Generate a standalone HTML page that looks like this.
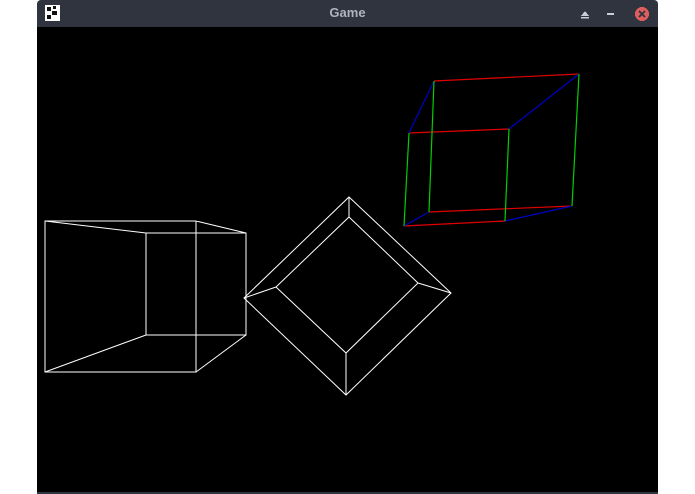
<!DOCTYPE html>
<html><head><style>
html,body{margin:0;padding:0;background:#fff;width:695px;height:494px;overflow:hidden}
.win{position:absolute;left:37px;top:0;width:621px;height:494px;background:#2f343f;border-radius:4px 4px 0 0}
.title{position:absolute;left:0;top:0;width:621px;height:27px;text-align:center;font:bold 13px "Liberation Sans",sans-serif;color:#aeb4bf;line-height:26px}
.canvas{position:absolute;left:0;top:27px;width:621px;height:465px;background:#000}
</style></head><body>
<div class="win">
<div class="title">Game</div>
<div class="canvas"></div>
</div>
<svg width="695" height="494" style="position:absolute;left:0;top:0" shape-rendering="crispEdges">
<!-- app icon -->
<rect x="45" y="5" width="15" height="16" fill="#fff"/>
<path d="M47 7h4v4h-4zM52 11h5v4h-5zM47 15h4v4h-4zM53 6h3v3h-3z" fill="#111"/>
<!-- buttons -->
<path d="M581 16l4-5 4 5z" fill="#c8ccd3"/><rect x="581" y="17" width="8" height="1.5" fill="#c8ccd3"/>
<rect x="607" y="13" width="7" height="2" fill="#c8ccd3"/>
<circle cx="642" cy="14" r="7" fill="#e05d5d"/>
<path d="M639 11l6 6M645 11l-6 6" stroke="#2f343f" stroke-width="1.8" shape-rendering="auto"/>
<g fill="none" stroke="#fff" stroke-width="1" shape-rendering="auto">
<!-- left cube -->
<path d="M45 221H196V372H45Z M146 233H246V335H146Z M45 221L146 233 M196 221L246 233 M196 372L246 335 M45 372L146 335"/>
<!-- diamond -->
<path d="M349 197L451 293L346 395L244 298Z M349 217L418 283L346 353L276 287Z M349 197V217 M451 293L418 283 M346 395V353 M244 298L276 287"/>
</g>
<g fill="none" stroke-width="1.2" shape-rendering="auto">
<path stroke="#e00000" d="M434 81L579 74 M409 133L509 129 M429 212L572 206 M404 226L505 221"/>
<path stroke="#0000c8" d="M434 81L409 133 M579 74L509 129 M404 226L429 212 M505 221L572 206"/>
<path stroke="#00d000" d="M434 81L429 212 M579 74L572 206 M409 133L404 226 M509 129L505 221"/>
</g>
</svg>
</body></html>
